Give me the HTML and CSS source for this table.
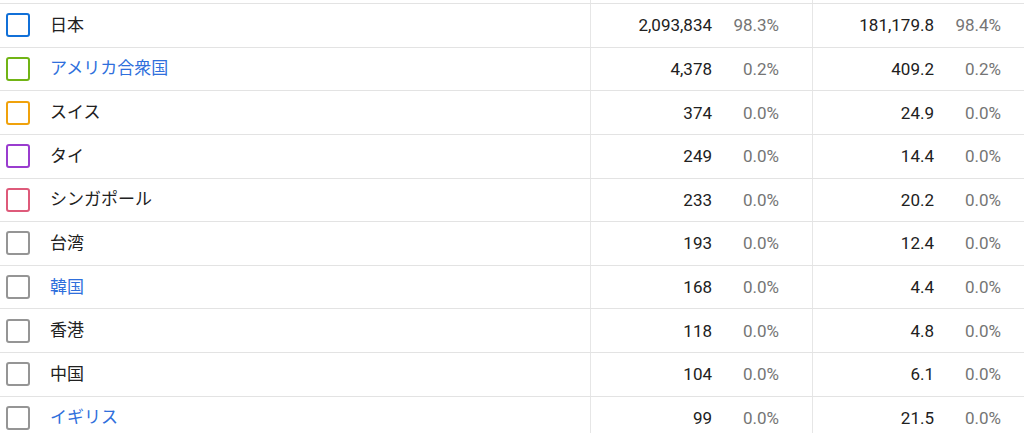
FILE: index.html
```html
<!DOCTYPE html>
<html lang="ja">
<head>
<meta charset="utf-8">
<title>Countries</title>
<link rel="stylesheet" href="styles.css">
</head>
<body>
<div class="table">
  <div class="row row-top"><div class="name"></div><div class="metric"></div><div class="metric"></div></div>

  <div class="row"><div class="name"><span class="cb cb-blue"></span><span class="label">日本</span></div>
    <div class="metric"><span class="val">2,093,834</span><span class="pct">98.3%</span></div>
    <div class="metric"><span class="val">181,179.8</span><span class="pct">98.4%</span></div></div>

  <div class="row"><div class="name"><span class="cb cb-green"></span><span class="label link">アメリカ合衆国</span></div>
    <div class="metric"><span class="val">4,378</span><span class="pct">0.2%</span></div>
    <div class="metric"><span class="val">409.2</span><span class="pct">0.2%</span></div></div>

  <div class="row"><div class="name"><span class="cb cb-orange"></span><span class="label">スイス</span></div>
    <div class="metric"><span class="val">374</span><span class="pct">0.0%</span></div>
    <div class="metric"><span class="val">24.9</span><span class="pct">0.0%</span></div></div>

  <div class="row"><div class="name"><span class="cb cb-purple"></span><span class="label">タイ</span></div>
    <div class="metric"><span class="val">249</span><span class="pct">0.0%</span></div>
    <div class="metric"><span class="val">14.4</span><span class="pct">0.0%</span></div></div>

  <div class="row"><div class="name"><span class="cb cb-pink"></span><span class="label">シンガポール</span></div>
    <div class="metric"><span class="val">233</span><span class="pct">0.0%</span></div>
    <div class="metric"><span class="val">20.2</span><span class="pct">0.0%</span></div></div>

  <div class="row"><div class="name"><span class="cb"></span><span class="label">台湾</span></div>
    <div class="metric"><span class="val">193</span><span class="pct">0.0%</span></div>
    <div class="metric"><span class="val">12.4</span><span class="pct">0.0%</span></div></div>

  <div class="row"><div class="name"><span class="cb"></span><span class="label link">韓国</span></div>
    <div class="metric"><span class="val">168</span><span class="pct">0.0%</span></div>
    <div class="metric"><span class="val">4.4</span><span class="pct">0.0%</span></div></div>

  <div class="row"><div class="name"><span class="cb"></span><span class="label">香港</span></div>
    <div class="metric"><span class="val">118</span><span class="pct">0.0%</span></div>
    <div class="metric"><span class="val">4.8</span><span class="pct">0.0%</span></div></div>

  <div class="row"><div class="name"><span class="cb"></span><span class="label">中国</span></div>
    <div class="metric"><span class="val">104</span><span class="pct">0.0%</span></div>
    <div class="metric"><span class="val">6.1</span><span class="pct">0.0%</span></div></div>

  <div class="row"><div class="name"><span class="cb"></span><span class="label link">イギリス</span></div>
    <div class="metric"><span class="val">99</span><span class="pct">0.0%</span></div>
    <div class="metric"><span class="val">21.5</span><span class="pct">0.0%</span></div></div>
</div>
</body>
</html>
```
FILE: styles.css
```css
html, body {
  margin: 0;
  padding: 0;
  background: #ffffff;
  overflow: hidden;
}
body {
  width: 1024px;
  height: 433px;
  font-family: Roboto, "Noto Sans CJK JP", sans-serif;
  font-size: 17px;
  color: #212121;
}
.table {
  width: 1034px;
}
.row {
  display: grid;
  grid-template-columns: 590px 222px 222px;
  height: 43.63px;
  box-sizing: border-box;
  border-bottom: 1px solid #e3e3e3;
}
.row-top {
  height: 4px;
}
.name {
  display: flex;
  align-items: center;
  padding-left: 6px;
  gap: 20px;
}
.cb {
  width: 24px;
  height: 24px;
  box-sizing: border-box;
  border: 2.5px solid #959595;
  border-radius: 3px;
  flex: none;
}
.cb-blue { border-color: #1170d8; }
.cb-green { border-color: #71b415; }
.cb-orange { border-color: #f0a20c; }
.cb-purple { border-color: #9a3ccf; }
.cb-pink { border-color: #de5a7a; }
.label {
  line-height: 1;
  white-space: nowrap;
}
.link {
  color: #2f6fdc;
}
.metric {
  display: flex;
  align-items: center;
  justify-content: flex-end;
  padding-right: 33px;
  border-left: 1px solid #e6e6e6;
}
.val {
  color: #212121;
}
.pct {
  width: 67px;
  text-align: right;
  color: #757575;
}
```
